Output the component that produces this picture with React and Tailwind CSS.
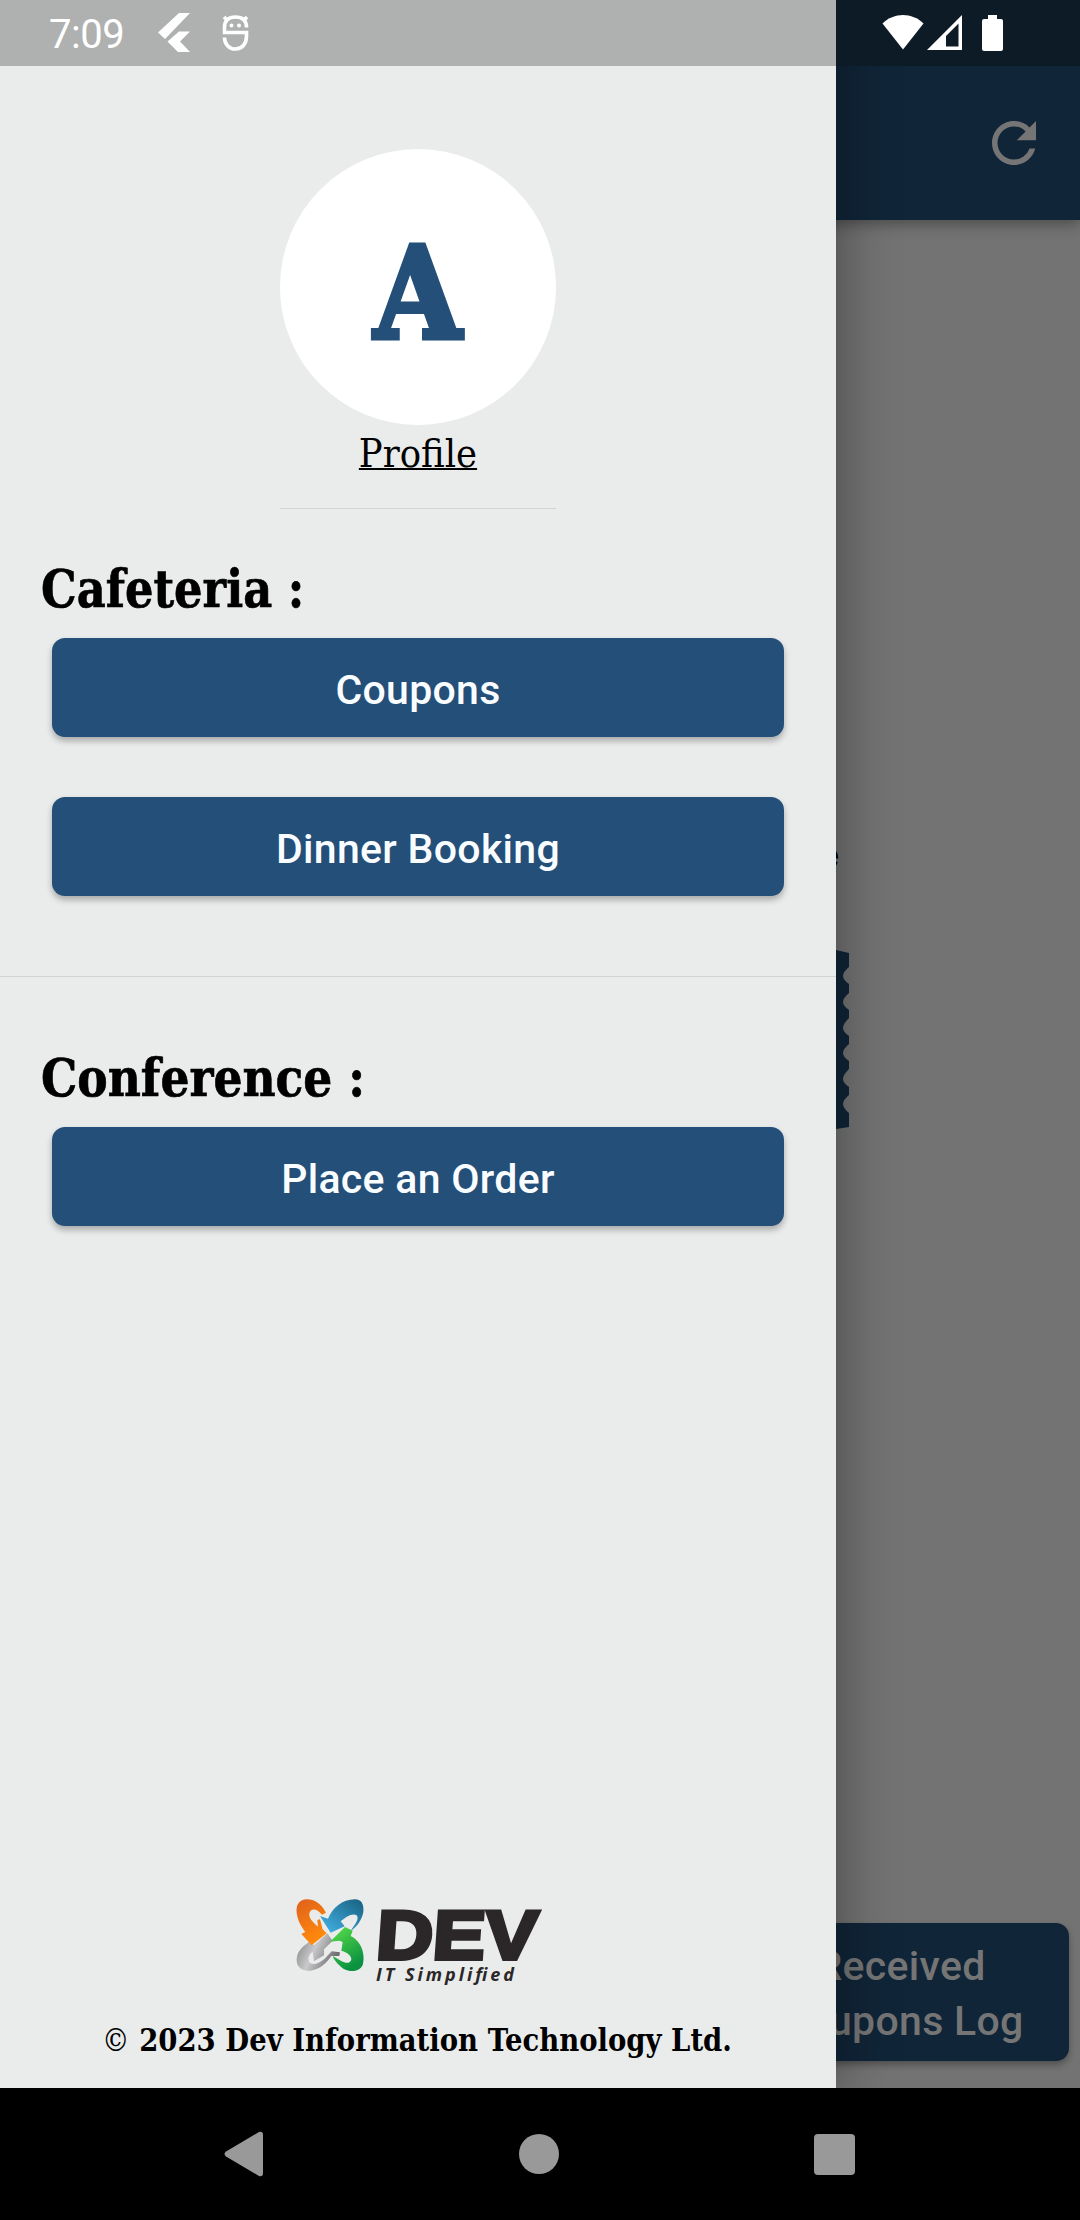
import React from 'react'
import { MdRefresh } from 'react-icons/md'

const slab = "font-['Roboto_Slab','DejaVu_Serif',serif]"

function StatusBar() {
  return (
    <div className="absolute inset-x-0 top-0 h-[66px] flex items-center text-white">
      <div className="w-[836px] h-full bg-[#afb1b0] flex items-center pl-[49px]">
        <span className="w-[109px] text-[40px] leading-[66px] pt-[4px] tracking-[-0.5px]">7:09</span>
        <svg className="w-8 h-10" viewBox="0 0 32 40" fill="#fff">
          <path d="M21 0H32L7 26L0 19.5Z" />
          <path d="M21 18.5H32L22 28.500L32 39H20L9.500 28.500Z" />
        </svg>
        <svg className="ml-[32px] w-[27px] h-9" viewBox="0 0 27 36" fill="none" stroke="#fff" strokeWidth="3.600">
          <path d="M24.500 12.500C24.500 5 20 2 13.500 2S2.500 5 2.500 12.500V17.500H24.500V21C24.500 29 20 34 13.500 34S2.500 29 2.500 22.500" />
          <path d="M2 2L5 5M25 2L22 5" />
          <circle cx="9.500" cy="10.500" r="1" strokeWidth="2" />
          <circle cx="17" cy="10.500" r="1" strokeWidth="2" />
        </svg>
      </div>
      <div className="flex-1 h-full bg-[#0d1b27] flex items-start">
        <svg className="ml-[46px] mt-[14px] w-[42px] h-9" viewBox="0 0 42 36" fill="#fff">
          <path d="M0.500 9.500C12 -2 30 -2 41.500 9.500L21 35.500Z" />
        </svg>
        <svg className="ml-[3px] mt-[15px] w-[36px] h-[35px]" viewBox="0 0 36 35" fill="#fff">
          <path fillRule="evenodd" d="M0 35L35 0V35ZM19 21V31.500H31.500V8.500Z" />
        </svg>
        <svg className="ml-[19px] mt-[15px] w-[22px] h-9" viewBox="0 0 22 36" fill="#fff">
          <path d="M6 0H15V4H19Q21 4 21 6V34Q21 36 19 36H2Q0 36 0 34V6Q0 4 2 4H6Z" />
        </svg>
      </div>
    </div>
  )
}

function Home() {
  return (
    <div className="h-[2088px] bg-[#737373] flex flex-col">
      <div className="h-[220px] shrink-0 pt-[66px] bg-[#102538] flex items-center justify-end shadow-[0_4px_14px_rgba(0,0,0,0.35)]">
        <MdRefresh className="mr-[33px] size-[66px] text-[#757575]" />
      </div>
      <div className={`${slab} mt-[609px] w-[849px] h-[50px] leading-[50px] text-[40px] font-bold text-right pr-[9px] text-black`}>
        Employee
      </div>
      <svg className="mt-[69px] ml-[400px] w-[449px] h-[183px]" viewBox="0 0 449 183" fill="#102538">
        <path d="M0 183V0H430L436 2L449 5V19Q443 24 443 28T449 36V45Q443 50 443 54T449 62V70Q443 76 443 80T449 88V96Q443 101 443 105T449 113V121Q443 127 443 131T449 139V147Q443 152 443 156T449 165V179L436 181Z" />
      </svg>
      <div className="mt-auto mb-[27px] mr-[11px] self-end w-[336px] h-[138px] rounded-[13px] bg-[#102538] text-[#757575] text-[41px] leading-[55px] font-medium tracking-[0.3px] text-center pt-[16px] shadow-[0_4px_7px_rgba(0,0,0,0.3)]">
        Received
        <br />
        Coupons Log
      </div>
    </div>
  )
}

function MenuButton({ children }) {
  return (
    <button className="block ml-[52px] w-[732px] h-[99px] rounded-[13px] bg-[#244f79] text-[#fafdff] text-[41px] font-medium tracking-[0.3px] leading-[99px] pt-[3px] shadow-[0_4px_6px_rgba(0,0,0,0.28)]">
      {children}
    </button>
  )
}

function Logo() {
  return (
    <svg className="block mx-auto w-[246px] h-[100px] overflow-visible" viewBox="0 0 246 100">
      <defs>
        <linearGradient id="orange" x1="0" y1="0" x2="0.4" y2="1">
          <stop offset="0" stopColor="#e0601c" />
          <stop offset="1" stopColor="#ff8a0c" />
        </linearGradient>
        <linearGradient id="blue" x1="1" y1="0" x2="0" y2="1">
          <stop offset="0" stopColor="#17607f" />
          <stop offset="1" stopColor="#45b5ea" />
        </linearGradient>
        <linearGradient id="green" x1="0" y1="0" x2="0.5" y2="1">
          <stop offset="0" stopColor="#5be04a" />
          <stop offset="1" stopColor="#0b9140" />
        </linearGradient>
        <linearGradient id="silver" x1="0" y1="0" x2="1" y2="0.4">
          <stop offset="0" stopColor="#7c7c7e" />
          <stop offset="0.5" stopColor="#c9c9cb" />
          <stop offset="1" stopColor="#6f6f72" />
        </linearGradient>
      </defs>
      <g transform="translate(-5 3) scale(0.3333)">
        <path fill="url(#silver)" d="M112 124L72 160L57 150C35 165 20 180 20 204C20 228 38 238 62 236C94 230 110 212 124 192L148 192L150 181L125 178L104 200C88 214 66 222 58 210C52 198 58 186 68 180L72 208L102 190V172L128 146Z" />
        <path fill="url(#orange)" d="M108 62C92 33 72 21 48 22C25 24 18 42 20 62C23 88 36 106 46 120L34 126L65 160L110 124L98 112L90 82L82 84L84 104C66 90 56 76 58 64C62 48 80 48 96 68Z" />
        <path fill="url(#blue)" d="M90 72L114 80C128 48 156 22 195 22C215 22 222 38 220 60C216 85 198 108 182 116C198 94 208 80 200 70C188 62 170 72 152 88L164 103L122 122Z" />
        <path fill="url(#green)" d="M120 149L165 105L188 116L182 132C212 146 228 185 218 220C205 242 180 240 160 230C142 216 132 204 128 192L154 207C168 216 184 214 184 200C182 188 168 180 154 176L158 150L148 146Z" />
      </g>
      <text x="80" y="0" textLength="161" lengthAdjust="spacingAndGlyphs" fill="#2b2728" stroke="#2b2728" strokeWidth="4" className="font-['Liberation_Sans'] font-bold text-[69px]" transform="translate(0 70) skewX(-4)">DEV</text>
      <text x="81" y="92" textLength="138" lengthAdjust="spacing" fill="#2b2728" className="font-['Open_Sans'] font-bold italic text-[18px]">IT Simplified</text>
    </svg>
  )
}

function Drawer() {
  return (
    <div className="absolute left-0 top-0 w-[836px] h-[2088px] bg-[#eaeceb] text-black flex flex-col shadow-[0_0_56px_rgba(0,0,0,0.4)]">
      <div className="mt-[149px] mx-auto size-[276px] rounded-full bg-white flex items-center justify-center">
        <span className={`${slab} pt-[12px] font-bold text-[128px] leading-[266px] text-[#244f79] scale-x-[0.88] [-webkit-text-stroke:5px_#244f79]`}>A</span>
      </div>
      <div className={`${slab} mx-auto h-[60px] text-[39px] leading-[58px] underline decoration-2 underline-offset-[1px] scale-x-[0.91]`}>
        Profile
      </div>
      <div className="mt-[23px] mx-auto w-[276px] h-[1px] bg-[#d2d4d3]" />
      <h2 className={`${slab} mt-[43px] ml-[41px] self-start h-[86px] text-[53px] leading-[73px] font-bold origin-left scale-x-[0.845] [-webkit-text-stroke:0.7px_black]`}>Cafeteria :</h2>
      <MenuButton>Coupons</MenuButton>
      <div className="h-[60px]" />
      <MenuButton>Dinner Booking</MenuButton>
      <div className="mt-[80px] h-[1px] bg-[#d2d4d3]" />
      <h2 className={`${slab} mt-[64px] ml-[41px] self-start h-[86px] text-[53px] leading-[73px] font-bold origin-left scale-x-[0.86] [-webkit-text-stroke:0.7px_black]`}>Conference :</h2>
      <MenuButton>Place an Order</MenuButton>
      <div className="mt-auto">
        <Logo />
        <p className={`${slab} h-[99px] pt-[13px] text-[31px] leading-[76px] font-bold whitespace-nowrap flex justify-center`}>
          <span className="mr-[2px] scale-x-[0.887]"><span className="font-normal">©</span> 2023 Dev Information Technology Ltd.</span>
        </p>
      </div>
    </div>
  )
}

function NavBar() {
  return (
    <div className="h-[132px] bg-black flex items-center justify-between pl-[224px] pr-[225px]">
      <svg className="w-10 h-[46px]" viewBox="0 0 40 46" fill="#999">
        <path d="M2 20.500L35 1Q39 0 39 4V42Q39 46 35 45L2 25.500Q-1 23 2 20.500Z" />
      </svg>
      <div className="size-10 rounded-full bg-[#999]" />
      <div className="size-[41px] rounded-[4px] bg-[#999]" />
    </div>
  )
}

export default function App() {
  return (
    <div className="relative w-[1080px] h-[2220px] overflow-hidden bg-black font-['Roboto',sans-serif]">
      <div className="relative h-[2088px] overflow-hidden">
        <Home />
        <Drawer />
        <StatusBar />
      </div>
      <NavBar />
    </div>
  )
}
